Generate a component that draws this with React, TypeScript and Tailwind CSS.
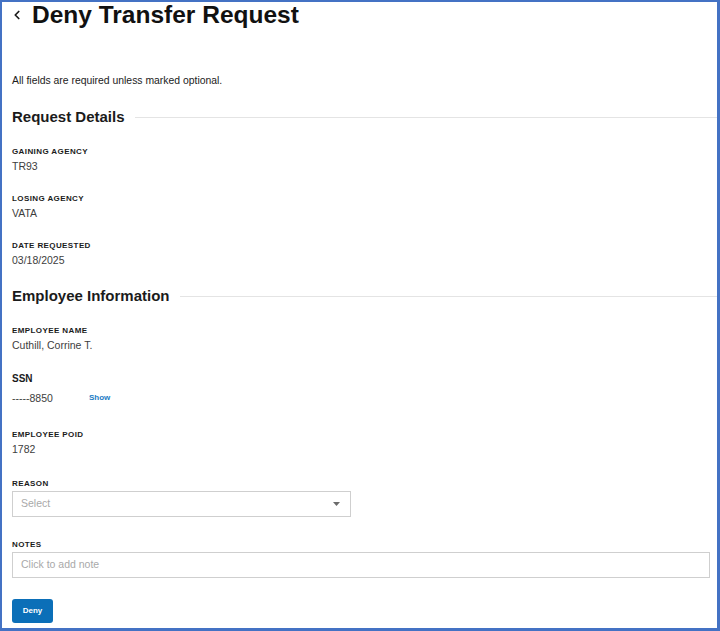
import { ChevronLeft } from 'lucide-react';

function Field({ label, value, className }: { label: string; value: string; className?: string }) {
    return (
        <div className={className}>
            <div className="text-[8px] leading-[12px] font-bold uppercase text-[#1b1b1b] tracking-[0.4px]">{label}</div>
            <div className="mt-[1px] text-[10.5px] leading-[14px] text-[#3d3d3d]">{value}</div>
        </div>
    );
}

function SectionHeading({ title, className }: { title: string; className?: string }) {
    return (
        <div className={`flex items-center gap-[10px] ${className ?? ''}`}>
            <h2 className="text-[15px] leading-[20px] font-bold text-[#1b1b1b] whitespace-nowrap">{title}</h2>
            <div className="h-px flex-1 bg-[#e4e4e4]"></div>
        </div>
    );
}

export default function App() {
    return (
        <div
            className="w-[720px] h-[631px] bg-white border-l-2 border-t-2 border-r-[3px] border-b-[3px] border-[#4472c4] overflow-hidden"
            style={{ fontFamily: '"Liberation Sans", Arial, sans-serif' }}
        >
            <div className="pl-[10px]">
                <div className="flex items-center h-[26px]">
                    <ChevronLeft size={14} strokeWidth={3} className="text-[#1b1b1b] -ml-[2px]" />
                    <h1 className="ml-[8px] text-[24.5px] leading-[26px] font-bold text-[#111]">Deny Transfer Request</h1>
                </div>

                <p className="mt-[46px] text-[10.4px] leading-[14px] text-[#1b1b1b]">All fields are required unless marked optional.</p>

                <SectionHeading title="Request Details" className="mt-[19px]" />

                <Field label="Gaining Agency" value="TR93" className="mt-[19px]" />
                <Field label="Losing Agency" value="VATA" className="mt-[20px]" />
                <Field label="Date Requested" value="03/18/2025" className="mt-[20px]" />

                <SectionHeading title="Employee Information" className="mt-[19px]" />

                <Field label="Employee Name" value="Cuthill, Corrine T." className="mt-[19px]" />

                <div className="mt-[20px]">
                    <div className="text-[10px] leading-[14px] font-bold text-[#1b1b1b]">SSN</div>
                    <div className="mt-[5px] flex items-center text-[10.5px] leading-[14px] text-[#3d3d3d]">
                        <span className="w-[77px]">-----8850</span>
                        <span className="text-[8px] font-bold text-[#1a7bc4]">Show</span>
                    </div>
                </div>

                <Field label="Employee POID" value="1782" className="mt-[24px]" />

                <div className="mt-[22px]">
                    <div className="text-[8px] leading-[12px] font-bold uppercase text-[#1b1b1b] tracking-[0.4px]">Reason</div>
                    <div className="mt-[1px] w-[339px] h-[26px] border border-[#cfcfcf] flex items-center justify-between pl-[8px] pr-[10px]">
                        <span className="text-[10.5px] text-[#a9a9a9]">Select</span>
                        <svg width="7" height="4" viewBox="0 0 7 4">
                            <path d="M0 0 L7 0 L3.5 4 Z" fill="#6b6b6b" />
                        </svg>
                    </div>
                </div>

                <div className="mt-[22px]">
                    <div className="text-[8px] leading-[12px] font-bold uppercase text-[#1b1b1b] tracking-[0.4px]">Notes</div>
                    <div className="mt-[1px] w-[698px] h-[26px] border border-[#cfcfcf] flex items-center pl-[8px]">
                        <span className="text-[10.5px] text-[#a9a9a9]">Click to add note</span>
                    </div>
                </div>

                <button className="mt-[21px] w-[41px] h-[24px] rounded-[3px] bg-[#0b6fb8] text-white text-[8px] font-bold flex items-center justify-center">
                    Deny
                </button>
            </div>
        </div>
    );
}
